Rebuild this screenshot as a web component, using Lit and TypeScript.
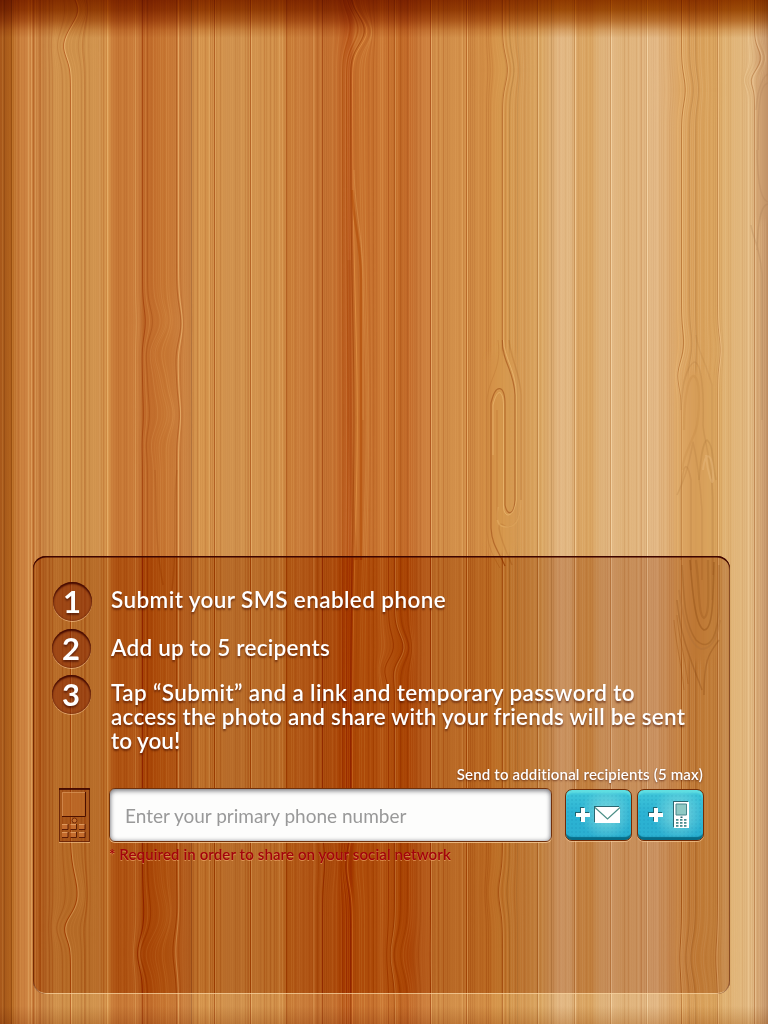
import { LitElement, html, css, svg } from "lit";
import { customElement } from "lit/decorators.js";

const W = 768;
const H = 1024;

// Base tone of the planks, left to right.
const TONES: [number, string][] = [
  [0, "#a9591b"], [5, "#a85a1a"], [12, "#b5671f"], [17, "#c37735"], [25, "#cd8341"], [35, "#c87f3e"],
  [45, "#c98645"], [55, "#cf914c"], [70, "#cd8f49"], [85, "#cf924c"], [100, "#d0924d"], [108, "#d9994f"],
  [112, "#c87a38"], [125, "#c87936"], [140, "#c97c3b"], [143, "#be6828"], [155, "#c36f2d"], [165, "#c67531"],
  [178, "#cb7f3d"], [190, "#c98242"], [194, "#d3934c"], [210, "#d3924b"], [230, "#cf904d"], [250, "#d1924d"],
  [275, "#d1904a"], [285, "#cf8a44"], [289, "#c77a35"], [300, "#c97c3a"], [320, "#c67635"], [335, "#c57130"],
  [345, "#be6022"], [351, "#b9571c"], [355, "#c6702c"], [370, "#c6702d"], [385, "#cc7a36"], [400, "#c46d29"], [408, "#c16828"],
  [420, "#ca7b3a"], [430, "#cf8240"], [432, "#d18e49"], [465, "#d28f49"], [470, "#cf8a44"], [490, "#d38f46"],
  [503, "#d6994e"], [525, "#d59a55"], [540, "#dba863"], [552, "#dcac72"], [560, "#e3b884"], [572, "#e0b57f"],
  [577, "#d9a463"], [590, "#daa561"], [600, "#ddb077"], [612, "#e2b883"], [622, "#deb178"], [640, "#e1b680"],
  [655, "#e4ba88"], [670, "#dfae74"], [681, "#dca563"], [695, "#d79d57"], [716, "#dba660"], [722, "#dfb06f"],
  [740, "#e1b67b"], [752, "#e3bb86"], [758, "#d5a775"], [768, "#bf8f64"],
];

// Places where the grain bends: x, y, spread x, spread y, shift.
const BENDS: number[][] = [
  [74, 10, 10, 15, 8], [70, 46, 13, 17, -7], [73, 895, 11, 28, 7], [68, 927, 12, 16, -8],
  [354, 32, 13, 19, 14], [345, 18, 8, 14, 3], [358, 420, 9, 160, 7],
  [155, 322, 13, 19, 7], [162, 353, 12, 19, -6], [176, 325, 8, 26, 4], [163, 415, 14, 22, 7], [156, 442, 10, 17, -3],
  [158, 915, 12, 26, 7], [152, 953, 14, 20, -8], [173, 950, 8, 26, -4],
  [397, 648, 12, 18, 9], [388, 668, 8, 14, -5], [352, 866, 12, 26, -5], [330, 862, 12, 24, 3], [405, 955, 14, 24, -7],
  [504, 70, 15, 20, 5], [500, 892, 14, 22, -4],
  [686, 90, 17, 20, 4], [757, 58, 6, 13, 7], [751, 80, 6, 10, -5],
  [700, 958, 17, 24, -5], [686, 345, 8, 20, 3], [683, 375, 7, 18, -4], [716, 350, 7, 20, 3],
];

const warp = (x: number, y: number) => {
  let dx = 0;
  for (const [cx, cy, sx, sy, a] of BENDS) {
    const u = (x - cx) / sx;
    const v = (y - cy) / sy;
    const e = u * u + v * v;
    if (e < 9) dx += a * Math.exp(-e);
  }
  return x + dx;
};

const grain = (x: number) => {
  if (!BENDS.some((b) => Math.abs(x - b[0]) < b[2] * 2.6)) return `M${x} 0V${H}`;
  let d = "";
  for (let y = 0; y <= H; y += 4) d += `${y ? "L" : "M"}${warp(x, y).toFixed(2)} ${y}`;
  return d;
};

let seed = 71;
const rnd = () => {
  seed = (seed * 16807) % 2147483647;
  return seed / 2147483647;
};

const FINE = Array.from({ length: 370 }, (_, i) => {
  const x = Math.floor(i * 2.08) + 0.5;
  const dark = rnd() < 0.5;
  return { x, c: dark ? (x > 520 ? "#b87a3c" : "#a6541c") : x > 500 ? "#f0cf9d" : "#e8ac62", o: 0.05 + rnd() * (x > 500 ? 0.16 : 0.22) };
});

const D = "#a3480f";
const L = "#f0bd78";
const STRONG: [number, string, number][] = [
  [4.5, "#7e3804", 0.5], [11.5, "#7e3804", 0.5], [28.5, L, 0.4], [31.5, L, 0.45], [33.5, D, 0.45], [35.5, L, 0.4], [40.5, D, 0.3],
  [70.5, "#b4541c", 0.65], [71.5, L, 0.75], [84.5, D, 0.25], [99.5, L, 0.35], [103.5, D, 0.25], [107.5, L, 0.55],
  [135.5, L, 0.3], [142.5, "#963000", 0.55], [147.5, D, 0.35], [176.5, D, 0.35], [178.5, L, 0.6], [191.5, "#8f5a35", 0.4],
  [199.5, L, 0.3], [209.5, L, 0.4], [214.5, D, 0.6], [215.5, L, 0.35], [248.5, D, 0.2], [250.5, D, 0.6], [251.5, L, 0.65],
  [264.5, D, 0.25], [279.5, L, 0.35], [282.5, L, 0.3], [286.5, D, 0.6], [313.5, L, 0.3], [317.5, D, 0.3], [322.5, "#942f00", 0.5],
  [342.5, "#a44400", 0.4], [346.5, "#a44400", 0.4], [350.5, "#a04408", 0.65], [352.5, "#eca352", 0.55], [373.5, D, 0.3],
  [388.5, D, 0.5], [394.5, D, 0.55], [395.5, L, 0.4], [400.5, D, 0.4], [407.5, D, 0.4], [430.5, "#963000", 0.55], [431.5, L, 0.6],
  [443.5, D, 0.2], [462.5, L, 0.35], [466.5, D, 0.5], [467.5, L, 0.65], [502.5, "#b4662b", 0.7], [503.5, L, 0.55],
  [509.5, "#a4753c", 0.35], [517.5, "#a4753c", 0.3], [537.5, "#ae6a31", 0.55], [538.5, "#f5d19a", 0.6], [551.5, "#a4753c", 0.35],
  [574.5, "#b8783a", 0.5], [575.5, "#fbd9a6", 0.65], [610.5, "#b8783a", 0.45], [611.5, "#ffe2b8", 0.6], [641.5, "#b8783a", 0.3],
  [646.5, "#c08b51", 0.4], [647.5, "#ffe2b8", 0.6], [677.5, L, 0.35], [681.5, "#ac6324", 0.6], [682.5, "#f6cc88", 0.45],
  [689.5, "#a4713a", 0.3], [695.5, "#a4713a", 0.3], [717.5, "#b06a2e", 0.5], [718.5, "#f6cc92", 0.6], [748.5, "#f8d9a8", 0.5],
  [754.5, "#a8642c", 0.5], [755.5, "#edc798", 0.55],
];

// Knots and swirls: path, colour, opacity, width.
const SWIRLS: [string, string, number, number][] = [
  ["M502.5 340C502 362 514 370 515 395V500C514 516 507 516 505 505V405C505 385 496 382 491 403V528C492 545 498 550 505 566", "#a4551c", 0.65, 1.2],
  ["M503.5 340C504 358 516 370 516.3 395V500C514 519 503 519 503.5 505V405C503 389 497 388 493 405V455", "#f0bf78", 0.6, 1],
  ["M498 340C502 370 489 377 487 400V530C488 545 491 553 500 568", "#b8702f", 0.35, 1],
  ["M509 340C511 360 520 372 521 395V505C520 521 512 530 505 526C495 519 498 533 512 565", "#b06a2c", 0.3, 1.4],
  ["M498 507C495 525 500 527 508 527C517 527 521 515 521 500", "#e9b36a", 0.5, 1.5],
  ["M497 410V520", "#c07431", 0.3, 2],
  ["M696 335C698 352 705 360 712 385V600", "#b1793c", 0.2, 1.5],
  ["M681 410C682 380 688 366 694 362C702 362 704 395 703 425C704 440 711 455 713 500V575", "#b1793c", 0.25, 1.5],
  ["M684 430C684 390 690 375 694 376C700 379 700 405 697 425C694 440 684 451 682 470", "#c18241", 0.25, 2.2],
  ["M677 495C684 480 688 470 693 442C696 455 700 480 702 510V580", "#b1793c", 0.25, 1.5],
  ["M699 480C701 455 703 442 707 440C714 446 712 462 716 480", "#b1793c", 0.3, 1.6],
  ["M703 470C705 450 712 452 713 474C714 495 707 470 706 455", "#efc187", 0.35, 2],
  ["M681 560V490C683 463 687 459 691 480V570", "#ae7438", 0.25, 1.6],
  ["M682 565C684 600 685 625 696 640C712 655 719 630 719 600V565", "#9d6a32", 0.25, 1.5],
  ["M690 560C693 600 696 626 704 630C713 630 713 600 714 562", "#9d6a32", 0.35, 1.6],
  ["M696 560C700 590 698 615 704 618C710 615 708 590 708 560", "#a87337", 0.25, 2.2],
  ["M679 590C684 625 690 645 701 649C712 649 717 638 720 620", "#c9975c", 0.45, 1.8],
  ["M677 600C680 635 690 658 702 690", "#95602b", 0.25, 1.5],
  ["M719 640C711 652 704 655 704 695", "#95602b", 0.25, 1.5],
  ["M674 620C676 645 680 655 684 690M677 615C679 640 684 650 688 684", "#a05f20", 0.25, 1],
  ["M756 110C758 85 764 76 768 74M758 150C758 95 761 85 768 83M757 150C758 190 762 200 768 202", "#b0805a", 0.3, 1.4],
  ["M751 225C753 240 760 245 762 275V420M757 250C758 215 762 205 768 204", "#a5764e", 0.25, 1.4],
  ["M155 470C157 500 154 540 163 585M177 470C172 510 178 540 172 590", "#a04c14", 0.25, 1.4],
  ["M352 190C354 230 361 240 361 280V560", "#b04a06", 0.55, 2.4],
  ["M354 170C355 215 364 238 363 290V420", "#e3a058", 0.45, 1],
  ["M349 260C350 400 349 470 356 560", "#a9490c", 0.3, 3.5],
];

@customElement("wood-backdrop")
export class WoodBackdrop extends LitElement {
  static styles = css`
    :host { display: block; }
    .grain { display: block; width: 768px; height: 1024px; }
    .floor { mix-blend-mode: lighten; }
  `;

  render() {
    return html`<svg class="grain" viewBox="0 0 768 1024" aria-hidden="true">
      <defs>
        <linearGradient id="tone" gradientUnits="userSpaceOnUse" x1="0" y1="0" x2=${W} y2="0">
          ${TONES.map(([x, c]) => svg`<stop offset=${x / W} stop-color=${c}></stop>`)}
        </linearGradient>
        <filter id="soft" x="-30%" y="-10%" width="160%" height="120%"><feGaussianBlur stdDeviation="3"></feGaussianBlur></filter>
      </defs>
      <rect width="768" height="1024" fill="url(#tone)"></rect>
      <g fill="none" stroke-width="1">
        ${FINE.map((l) => svg`<path d=${grain(l.x)} stroke=${l.c} stroke-opacity=${l.o}></path>`)}
        ${STRONG.map(([x, c, o]) => svg`<path d=${grain(x)} stroke=${c} stroke-opacity=${o}></path>`)}
      </g>
      <g fill="url(#tone)" filter="url(#soft)" opacity="0.9">
        <rect x="488" y="350" width="30" height="205" rx="12"></rect>
        <rect x="681" y="372" width="34" height="290" rx="12"></rect>
        <rect x="758" y="80" width="14" height="140"></rect>
      </g>
      <g fill="none">
        ${SWIRLS.map(([d, c, o, w]) => svg`<path d=${d} stroke=${c} stroke-opacity=${o} stroke-width=${w}></path>`)}
      </g>
      <rect class="floor" x="33" y="556" width="697" height="438" rx="13" fill="rgb(25,38,36)"></rect>
    </svg>`;
  }
}

@customElement("app-root")
export class AppRoot extends LitElement {
  static styles = css`
    :host {
      display: block;
      width: 768px;
      height: 1024px;
      overflow: hidden;
      font-family: Lato, "Open Sans", sans-serif;
      font-variant-ligatures: none;
      color: #fff;
    }
    .page {
      position: relative;
      isolation: isolate;
      box-sizing: border-box;
      width: 768px;
      height: 1024px;
      padding: 556px 38px 30px 33px;
    }
    .backdrop { position: absolute; inset: 0; }
    .page::before {
      content: "";
      position: absolute;
      inset: 0 0 auto 0;
      height: 38px;
      z-index: 1;
      mix-blend-mode: multiply;
      background: linear-gradient(#a25000, #b06810 26%, #cf9a58 55%, #f0dcc0 80%, #fff);
    }
    .page::after {
      content: "";
      position: absolute;
      inset: auto 0 0 0;
      height: 18px;
      mix-blend-mode: multiply;
      background: linear-gradient(#fff, #e6d3ba);
    }
    .panel {
      position: relative;
      box-sizing: border-box;
      height: 438px;
      padding: 26px 26px 0 20px;
    }
    .panel::before {
      content: "";
      position: absolute;
      inset: 0;
      border-radius: 13px;
      background: rgb(25, 38, 36);
      mix-blend-mode: difference;
    }
    .panel::after {
      content: "";
      position: absolute;
      inset: 0;
      border-radius: 13px;
      box-shadow: inset 0 1px 1px #3c0500, inset 0 1.5px 0 #4a0c00, inset 1px 0 0 rgba(90, 25, 0, 0.5),
        inset -1px 0 0 rgba(90, 25, 0, 0.5), inset 0 -1px 0 rgba(255, 222, 170, 0.75);
    }
    .content { position: relative; z-index: 1; }
    .step { display: flex; align-items: flex-start; height: 47px; }
    .step.second { height: 46px; margin-left: -1px; }
    .step.third { height: 90px; margin-left: -1px; }
    .badge {
      flex: none;
      box-sizing: border-box;
      width: 39px;
      height: 39px;
      border-radius: 50%;
      background: rgba(136, 42, 8, 0.55);
      box-shadow: inset 0 2px 2px #420800, inset 0 0 2px rgba(66, 8, 0, 0.6), 0 1px 0 rgba(255, 205, 155, 0.6);
      font-size: 31px;
      font-weight: 700;
      line-height: 38px;
      text-align: center;
      text-indent: -1px;
      text-shadow: 0 2px 2px rgba(60, 10, 0, 0.6);
    }
    .say {
      margin: 6px 0 0 19px;
      font-size: 22.5px;
      font-weight: 600;
      line-height: 24px;
      white-space: nowrap;
      letter-spacing: 0.4px;
      text-shadow: 0 2px 2px rgba(60, 10, 0, 0.55);
    }
    .step.second .say { margin: 7px 0 0 20px; letter-spacing: 0.25px; }
    .step.third .say { margin: 6px 0 0 20px; letter-spacing: 0.38px; }
    .tight { letter-spacing: 0.25px; }
    .loose { letter-spacing: 0; }
    .hint {
      height: 23px;
      padding-right: 1px;
      font-size: 15px;
      font-weight: 600;
      line-height: 19px;
      letter-spacing: 0.16px;
      text-align: right;
      text-shadow: 0 1px 2px rgba(60, 10, 0, 0.6);
    }
    .row { display: flex; align-items: flex-start; }
    .handset { flex: none; display: block; width: 33px; height: 56px; margin: 0 18px 0 5px; }
    .field {
      box-sizing: border-box;
      width: 443px;
      height: 54px;
      padding: 0 15px;
      border: 1px solid #70300a;
      border-radius: 6px;
      background: #fdfdfc;
      box-shadow: inset 0 2px 5px rgba(60, 60, 70, 0.55), inset 0 0 4px rgba(60, 60, 70, 0.4), 0 1px 0 rgba(255, 215, 165, 0.7);
      color: #999;
      font-size: 19px;
      line-height: 53px;
      white-space: nowrap;
    }
    .add {
      box-sizing: border-box;
      width: 67px;
      height: 52px;
      margin: 1px 0 0 13px;
      border: 1px solid #742c05;
      border-radius: 7px;
      background: radial-gradient(circle at 62% 48%, rgba(160, 232, 228, 0.7), transparent 55%),
        radial-gradient(circle, rgba(10, 120, 165, 0.13) 0.7px, transparent 0.9px) 0 0 / 4px 4px,
        linear-gradient(#42c8da, #2cb3d3 45%, #2aafd0);
      box-shadow: inset 0 4px 2px -1px #5fdfe2, inset 0 -4px 1px -1px #066d88, 0 1px 0 rgba(255, 215, 165, 0.6);
    }
    .add + .add { margin-left: 5px; }
    .glyph { display: block; width: 65px; height: 50px; }
    .note {
      margin: 0 0 0 56px;
      color: #a3040c;
      font-size: 15px;
      font-weight: 600;
      line-height: 20px;
      letter-spacing: 0.12px;
      white-space: nowrap;
      text-shadow: 0 1px 0 rgba(255, 190, 130, 0.5);
    }
  `;

  private handset() {
    const keys = [0, 1, 2].flatMap((c) => [0, 1].map((r) => [c, r]));
    return svg`
      <path d="M1.5 .5H31.5V53.5H1.5Z" fill="#8c2a00" fill-opacity=".32" stroke="#5a1500" stroke-opacity=".75"></path>
      <path d="M1 1H32" stroke="#3c0500" stroke-width="1.6"></path>
      <path d="M1 54.5H32" stroke="#ffd09a" stroke-opacity=".55"></path>
      <rect x="4" y="4" width="24" height="25" fill="#c8752f" fill-opacity=".55"></rect>
      <path d="M4.500 29V4.500H28" fill="none" stroke="#eab078" stroke-opacity=".45"></path>
      <path d="M4 28.500H27.500V4" fill="none" stroke="#4c1000"></path>
      <circle cx="16.500" cy="32.500" r="2.400" fill="#c5702f" stroke="#5a1500" stroke-width=".7"></circle>
      ${keys.map(([c, r]) => svg`<path d="M${4 + c * 8.5} ${36 + r * 8}h6v6h-6z" fill="#c46c2d"></path>
        <path d="M${4 + c * 8.5} ${41.5 + r * 8}h6v-5.500" fill="none" stroke="#4c1000" stroke-opacity=".85"></path>
        <path d="M${4 + c * 8.5} ${36.5 + r * 8}h5.500" stroke="#e5a46b" stroke-width=".8"></path>`)}`;
  }

  private plus(x: number, y: number, c: string) {
    return svg`<path d="M${x + 5} ${y}h4v5h5v4h-5v5h-4v-5h-5v-4h5z" fill=${c}></path>`;
  }

  render() {
    const keys = [0, 1, 2].flatMap((c) => [0, 1, 2].map((r) => [c, r]));
    return html`
      <div class="page">
        <wood-backdrop class="backdrop"></wood-backdrop>
        <div class="panel">
          <div class="content">
            <div class="step"><div class="badge">1</div><div class="say">Submit your SMS enabled phone</div></div>
            <div class="step second"><div class="badge">2</div><div class="say">Add up to 5 recipents</div></div>
            <div class="step third">
              <div class="badge">3</div>
              <div class="say">Tap “Submit” and a link and temporary password to<br /><span class="tight">access the photo and share with your friends will be sent</span><br /><span class="loose">to you!</span></div>
            </div>
            <div class="hint">Send to additional recipients (5 max)</div>
            <div class="row">
              <svg class="handset" viewBox="0 0 33 56">${this.handset()}</svg>
              <div class="field">Enter your primary phone number</div>
              <div class="add">
                <svg class="glyph" viewBox="0 0 65 50">
                  ${this.plus(9, 17, "#1c6470")}${this.plus(10, 18, "#fff")}
                  <path d="M28 16h25v16h-25z" fill="#2b6670"></path>
                  <path d="M29 17h25v16h-25z" fill="#fff"></path>
                  <path d="M29 17.500L41.500 29L54 17.500" fill="none" stroke="#4b8e86" stroke-width="1.200"></path>
                </svg>
              </div>
              <div class="add">
                <svg class="glyph" viewBox="0 0 65 50">
                  ${this.plus(10, 17, "#1c6470")}${this.plus(11, 18, "#fff")}
                  <path d="M35 11h15v26h-15z" fill="#2b6670"></path>
                  <path d="M36 12h15v26h-15z" fill="#fff"></path>
                  <path d="M38 14h10.500v11h-10.500z" fill="#8fc9c4" stroke="#47868a"></path>
                  <path d="M42.500 26.500h2v1.500h-2z" fill="#2b6670"></path>
                  ${keys.map(([c, r]) => svg`<path d="M${38 + c * 4} ${29 + r * 3}h2.500v1.800h-2.500z" fill="#4c8d90"></path>`)}
                </svg>
              </div>
            </div>
            <div class="note">* Required in order to share on your social network</div>
          </div>
        </div>
      </div>
    `;
  }
}
